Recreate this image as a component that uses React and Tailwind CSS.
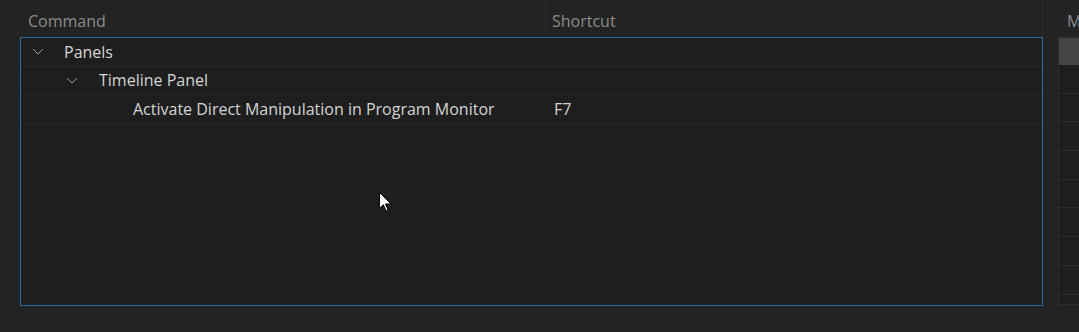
import React from "react";

const rows = [
  { depth: 0, label: "Panels", expand: true },
  { depth: 1, label: "Timeline Panel", expand: true },
  { depth: 2, label: "Activate Direct Manipulation in Program Monitor", shortcut: "F7" },
];

const Chevron = () => (
  <svg width="12" height="7" viewBox="0 0 12 7" fill="none" className="text-[#9a9a9a]">
    <path d="M1 1l5 5 5-5" stroke="currentColor" strokeWidth="1" />
  </svg>
);

const Cursor = () => (
  <svg width="13" height="20" viewBox="0 0 13 20" className="absolute left-[379px] top-[192px]">
    <path d="M0.5 0.5v16l3.8-3.8 2.7 6.3 2.2-1-2.7-6h5.5z" fill="#fff" stroke="#000" strokeWidth="1" />
  </svg>
);

const App = () => {
  return (
    <main className="relative w-[1079px] h-[332px] overflow-hidden bg-[#232323] font-['Open_Sans','Noto_Sans',sans-serif] text-[16px]">
      <div className="flex pl-[20px] h-full">
        <section className="w-[1023px] flex flex-col shrink-0">
          <div className="h-[37px] flex text-[#8c8c8c]">
            <div className="w-[526px] pl-[8px] pt-[9px] border-r border-[#262626]">Command</div>
            <div className="flex-1 pl-[6px] pt-[9px] border-r border-[#2c2c2c]">Shortcut</div>
          </div>
          <div className="h-[269px] border border-[#2f6aa5] bg-[#1e1e1e]">
            {rows.map((r) => (
              <div key={r.label} className="h-[28.5px] flex items-center border-b border-[#2a2a2a] text-[#d4d4d4]">
                <div className="w-[526px] flex items-center">
                  <div className={r.depth === 0 ? "w-[43px] pl-[11px]" : r.depth === 1 ? "w-[78px] pl-[45px]" : "w-[112px]"}>
                    {r.expand && <Chevron />}
                  </div>
                  <span>{r.label}</span>
                </div>
                <div className="pl-[7px]">{r.shortcut}</div>
              </div>
            ))}
          </div>
        </section>
        <aside className="ml-[15px] flex-1 flex flex-col">
          <div className="h-[37px] pl-[9px] pt-[9px] text-[#8c8c8c]">M</div>
          <div className="h-[268px] border border-[#2e2e2e] bg-[#1e1e1e]">
            <div className="h-[27px] bg-[#444444]" />
            {Array.from({ length: 8 }).map((_, i) => (
              <div key={i} className="h-[28.7px] border-b border-[#2d2d2d]" />
            ))}
          </div>
        </aside>
      </div>
      <Cursor />
    </main>
  );
};

export default App;
